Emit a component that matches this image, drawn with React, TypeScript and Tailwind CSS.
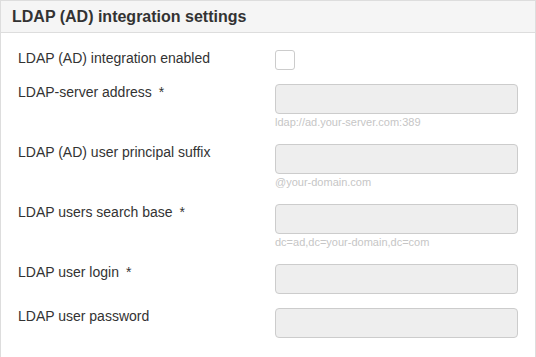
import React from "react";

type Row = { label: string; required?: boolean; hint?: string; checkbox?: boolean };

const rows: Row[] = [
  { label: "LDAP (AD) integration enabled", checkbox: true },
  { label: "LDAP-server address", required: true, hint: "ldap://ad.your-server.com:389" },
  { label: "LDAP (AD) user principal suffix", hint: "@your-domain.com" },
  { label: "LDAP users search base", required: true, hint: "dc=ad,dc=your-domain,dc=com" },
  { label: "LDAP user login", required: true },
  { label: "LDAP user password" },
];

export default function App() {
  return (
    <div
      className="w-[536px] h-[357px] bg-white border-l border-r border-t border-[#dddddd] overflow-hidden"
      style={{ fontFamily: '"Liberation Sans", Arial, sans-serif' }}
    >
      <div className="h-[32px] bg-[#f5f5f5] border-b border-[#dddddd] flex items-center pl-[11px]">
        <span className="text-[16px] font-bold text-[#333333] leading-none">LDAP (AD) integration settings</span>
      </div>
      <div className="pt-[17px] pl-[17px] flex flex-col gap-[14px]">
        {rows.map((r) => (
          <div key={r.label} className="flex">
            <div className="w-[257px] text-[14px] leading-4 text-[#333333]">
              {r.label}
              {r.required && <span className="ml-[7px]">*</span>}
            </div>
            <div className="flex flex-col">
              {r.checkbox ? (
                <div className="w-[20px] h-[20px] border border-[#cccccc] rounded-[3px] bg-white" />
              ) : (
                <div className="w-[243px] h-[30px] border border-[#cccccc] rounded-[4px] bg-[#eeeeee]" />
              )}
              {r.hint && (
                <div className="text-[11px] leading-4 text-[#c6c6c6] h-[16px]">{r.hint}</div>
              )}
            </div>
          </div>
        ))}
      </div>
    </div>
  );
}
